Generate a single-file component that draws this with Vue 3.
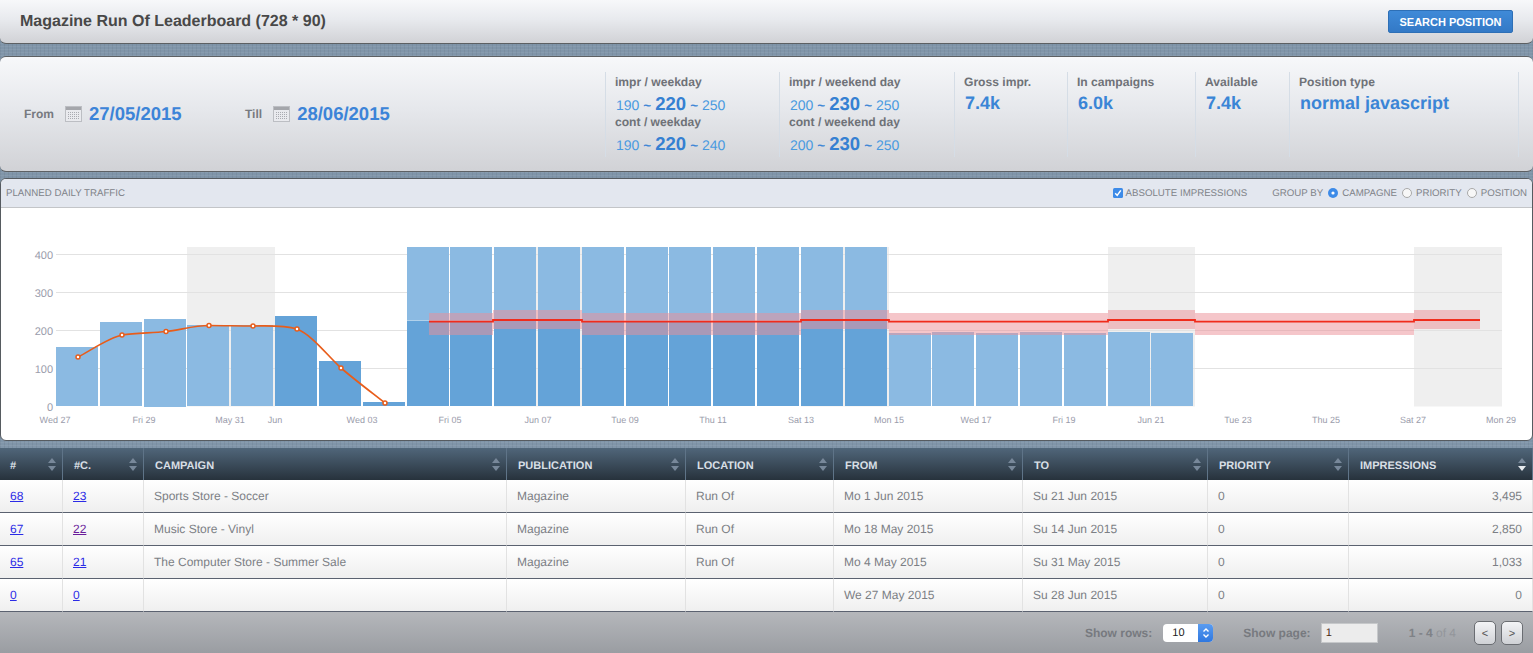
<script setup>
const statGroups = [
  { a: 'impr / weekday', av: ['190', '220', '250'], b: 'cont / weekday', bv: ['190', '220', '240'] },
  { a: 'impr / weekend day', av: ['200', '230', '250'], b: 'cont / weekend day', bv: ['200', '230', '250'] }
]
const singles = [
  { label: 'Gross impr.', value: '7.4k' },
  { label: 'In campaigns', value: '6.0k' },
  { label: 'Available', value: '7.4k' },
  { label: 'Position type', value: 'normal javascript' }
]
const gridLines = [254.5, 292.5, 330.5, 368.5]
const yLabels = [
  { t: '400', y: 259 }, { t: '300', y: 297 }, { t: '200', y: 335 }, { t: '100', y: 373 }, { t: '0', y: 411 }
]
const xLabels = [
  ['Wed 27', 55], ['Fri 29', 144], ['May 31', 230], ['Jun', 275], ['Wed 03', 362], ['Fri 05', 450],
  ['Jun 07', 538], ['Tue 09', 625], ['Thu 11', 713], ['Sat 13', 801], ['Mon 15', 889], ['Wed 17', 976],
  ['Fri 19', 1064], ['Jun 21', 1151], ['Tue 23', 1238], ['Thu 25', 1326], ['Sat 27', 1413], ['Mon 29', 1501]
]
const weekends = [[187, 88], [494, 88], [801, 88], [1108, 87], [1414, 88]]
const earlyBars = [
  [56, 347, 0, 406], [100, 322, 0, 406], [144, 319, 0, 407], [187, 325, 0, 406], [231, 325, 0, 406],
  [275, 316, 1, 406], [319, 361, 1, 406], [363, 402, 1, 406]
]
const fullBars = [407, 450, 494, 538, 582, 626, 669, 713, 757, 801, 845]
const lateBars = [[889, 333], [932, 332], [976, 333], [1020, 332], [1064, 333], [1108, 332], [1151, 333]]
const bands = [
  [429, 493, 313, 335], [493, 582, 310, 329], [582, 801, 313, 335], [801, 889, 310, 329],
  [889, 1108, 313, 335], [1108, 1195, 310, 329], [1195, 1414, 313, 335], [1414, 1480, 310, 329]
]
const dots = [[78, 357], [122, 335], [166, 331.5], [209, 325.5], [253, 326], [297, 329], [341, 368], [385, 403]]
const columns = [
  { t: '#' }, { t: '#C.' }, { t: 'Campaign' }, { t: 'Publication' }, { t: 'Location' },
  { t: 'From' }, { t: 'To' }, { t: 'Priority' }, { t: 'Impressions', active: true }
]
const rows = [
  ['68', '23', 'Sports Store - Soccer', 'Magazine', 'Run Of', 'Mo 1 Jun 2015', 'Su 21 Jun 2015', '0', '3,495'],
  ['67', '22', 'Music Store - Vinyl', 'Magazine', 'Run Of', 'Mo 18 May 2015', 'Su 14 Jun 2015', '0', '2,850'],
  ['65', '21', 'The Computer Store - Summer Sale', 'Magazine', 'Run Of', 'Mo 4 May 2015', 'Su 31 May 2015', '0', '1,033'],
  ['0', '0', '', '', '', 'We 27 May 2015', 'Su 28 Jun 2015', '0', '0']
]
const widths = [63, 81, 363, 179, 148, 189, 185, 141, 184]
</script>

<template>
  <div class="page">
    <header class="bar">
      <h1>Magazine Run Of Leaderboard (728 * 90)</h1>
      <button class="search">SEARCH POSITION</button>
    </header>

    <section class="panel">
      <div class="dates">
        <div class="date first">
          <span class="dlabel">From</span>
          <svg class="cal" viewBox="0 0 17 16" width="17" height="16">
            <rect x=".5" y=".5" width="16" height="15" fill="#e9eaee" stroke="#bcbec3" />
            <rect x="1" y="1" width="15" height="3" fill="#a4a6ab" />
            <path d="M3 6.5h11M3 8.5h11M3 10.5h11M3 12.5h11" stroke="#a9abb1" stroke-dasharray="1 1" />
          </svg>
          <span class="dval">27/05/2015</span>
        </div>
        <div class="date">
          <span class="dlabel">Till</span>
          <svg class="cal" viewBox="0 0 17 16" width="17" height="16">
            <rect x=".5" y=".5" width="16" height="15" fill="#e9eaee" stroke="#bcbec3" />
            <rect x="1" y="1" width="15" height="3" fill="#a4a6ab" />
            <path d="M3 6.5h11M3 8.5h11M3 10.5h11M3 12.5h11" stroke="#a9abb1" stroke-dasharray="1 1" />
          </svg>
          <span class="dval">28/06/2015</span>
        </div>
      </div>
      <div class="stats">
        <div v-for="g in statGroups" :key="g.a" class="stat">
          <div class="slabel">{{ g.a }}</div>
          <div class="range"><span>{{ g.av[0] }}</span><b class="t">~</b><b class="mid">{{ g.av[1] }}</b><b class="t">~</b><span>{{ g.av[2] }}</span></div>
          <div class="slabel second">{{ g.b }}</div>
          <div class="range"><span>{{ g.bv[0] }}</span><b class="t">~</b><b class="mid">{{ g.bv[1] }}</b><b class="t">~</b><span>{{ g.bv[2] }}</span></div>
        </div>
        <div v-for="s in singles" :key="s.label" class="stat">
          <div class="slabel">{{ s.label }}</div>
          <div class="big">{{ s.value }}</div>
        </div>
      </div>
    </section>

    <section class="chart">
      <div class="chart-head">
        <span class="ctitle">PLANNED DAILY TRAFFIC</span>
        <div class="controls">
          <label class="opt abs">
            <svg viewBox="0 0 10 10" width="10" height="10"><rect width="10" height="10" rx="1.5" fill="#3d8be8" /><path d="M2.2 5.2l2 2.2 3.6-5" fill="none" stroke="#fff" stroke-width="1.5" /></svg>
            ABSOLUTE IMPRESSIONS
          </label>
          <span class="opt gb">GROUP BY</span>
          <label class="opt">
            <svg viewBox="0 0 10 10" width="10" height="10"><circle cx="5" cy="5" r="5" fill="#3d8be8" /><circle cx="5" cy="5" r="1.6" fill="#fff" /></svg>
            CAMPAGNE
          </label>
          <label class="opt">
            <svg viewBox="0 0 10 10" width="10" height="10"><circle cx="5" cy="5" r="4.5" fill="#f7f7f7" stroke="#a8a8a8" /></svg>
            PRIORITY
          </label>
          <label class="opt">
            <svg viewBox="0 0 10 10" width="10" height="10"><circle cx="5" cy="5" r="4.5" fill="#f7f7f7" stroke="#a8a8a8" /></svg>
            POSITION
          </label>
        </div>
      </div>
      <svg class="plot" viewBox="1 208 1531 232" width="1531" height="232">
        <rect v-for="w in weekends" :key="w[0]" :x="w[0]" y="247" :width="w[1]" height="159.5" fill="#efefef" />
        <line v-for="g in gridLines" :key="g" x1="56" x2="1502" :y1="g" :y2="g" stroke="#e2e2e2" />
        <text v-for="l in yLabels" :key="l.t" x="53" :y="l.y" text-anchor="end" class="ylab">{{ l.t }}</text>
        <text v-for="l in xLabels" :key="l[0]" :x="l[1]" y="423" text-anchor="middle" class="xlab">{{ l[0] }}</text>

        <rect v-for="b in earlyBars" :key="b[0]" :x="b[0]" :y="b[1]" width="42" :height="b[3] - b[1]" :fill="b[2] ? '#64a3d8' : '#8bbae2'" />
        <g v-for="x in fullBars" :key="x">
          <rect :x="x" y="247" width="42" height="73" fill="#8bbae2" />
          <rect :x="x" y="320.5" width="42" height="85.5" fill="#64a3d8" />
        </g>
        <rect v-for="b in lateBars" :key="b[0]" :x="b[0]" :y="b[1]" width="42" :height="406 - b[1]" fill="#8bbae2" />

        <rect v-for="b in bands" :key="b[0]" :x="b[0]" :y="b[2]" :width="b[1] - b[0]" :height="b[3] - b[2]" fill="#eb8f97" fill-opacity=".51" />
        <path d="M429 321.7H493V320H582V321.7H801V320H889V321.7H1108V320H1195V321.7H1414V320H1480" fill="none" stroke="#f02c1c" stroke-width="1.8" />

        <path d="M78 357C90 351 108 338 122 335C136 333 152 333 166 331.5C180 330 194 325.5 209 325.5C224 325.5 238 326 253 326C268 326 284 325 297 329C312 335 326 354 341 368C355 380 371 392 385 403" fill="none" stroke="#e85d1b" stroke-width="1.7" />
        <circle v-for="d in dots" :key="d[0]" :cx="d[0]" :cy="d[1]" r="2" fill="#fff" stroke="#e85d1b" stroke-width="1.5" />
      </svg>
    </section>

    <table class="grid">
      <colgroup><col v-for="(w, i) in widths" :key="i" :width="w" /></colgroup>
      <thead>
        <tr>
          <th v-for="c in columns" :key="c.t">
            {{ c.t }}
            <svg class="sort" viewBox="0 0 8 13" width="8" height="13">
              <path d="M4 0l4 5H0z" fill="#78889a" />
              <path d="M4 13l4-5H0z" :fill="c.active ? '#e6eaee' : '#78889a'" />
            </svg>
          </th>
        </tr>
      </thead>
      <tbody>
        <tr v-for="r in rows" :key="r[0]">
          <td v-for="(v, i) in r" :key="i" :class="{ num: i === 8 }">
            <a v-if="i < 2" href="#" :class="{ visited: v === '22' }">{{ v }}</a>
            <template v-else>{{ v }}</template>
          </td>
        </tr>
      </tbody>
    </table>

    <footer class="pager">
      <span class="plabel">Show rows:</span>
      <div class="sel">
        <span class="selv">10</span>
        <span class="selb">
          <svg viewBox="0 0 8 12" width="8" height="12"><path d="M1.5 4.5L4 2l2.5 2.5M1.5 7.5L4 10l2.5-2.5" fill="none" stroke="#fff" stroke-width="1.4" /></svg>
        </span>
      </div>
      <span class="plabel pg">Show page:</span>
      <div class="pinput">1</div>
      <span class="count"><b>1 - 4</b> of 4</span>
      <button class="nav">&lt;</button>
      <button class="nav">&gt;</button>
    </footer>
  </div>
</template>

<style>
html, body { margin: 0; background: #8095a9; }
</style>

<style scoped>
.page {
  width: 1533px;
  height: 653px;
  overflow: hidden;
  font-family: "Liberation Sans", Arial, sans-serif;
  text-rendering: geometricPrecision;
  background-color: #8095a9;
  background-image:
    repeating-linear-gradient(0deg, rgba(255, 255, 255, .06) 0 1px, transparent 1px 3px),
    repeating-linear-gradient(90deg, rgba(0, 0, 0, .05) 0 1px, transparent 1px 4px);
}
.bar {
  box-sizing: border-box;
  height: 44px;
  display: flex;
  align-items: center;
  justify-content: space-between;
  padding: 0 20px;
  background: linear-gradient(#f7f8fa, #e8eaee 45%, #d1d2d6);
  border-bottom: 1px solid #5d6063;
  border-radius: 0 0 6px 6px;
}
.bar h1 {
  margin: 0;
  padding-top: 1px;
  font-size: 16px;
  font-weight: bold;
  color: #484848;
}
.search {
  box-sizing: border-box;
  width: 125px;
  height: 23px;
  padding: 0;
  font: bold 11px "Liberation Sans", Arial, sans-serif;
  color: #fff;
  background: linear-gradient(#3f8ad8, #3379c6);
  border: 1px solid #2d6fb6;
  border-radius: 2px;
}
.panel {
  box-sizing: border-box;
  height: 116px;
  margin-top: 12px;
  display: flex;
  align-items: center;
  background: linear-gradient(#f7f8fa, #e6e8ec 45%, #d1d2d6);
  border-top: 1px solid #5d6063;
  border-bottom: 1px solid #5d6063;
  border-radius: 6px;
}
.dates {
  width: 605px;
  display: flex;
  padding-left: 24px;
  box-sizing: border-box;
}
.date { display: flex; align-items: center; }
.date.first { width: 221px; }
.dlabel { font-size: 12px; font-weight: bold; color: #777a80; margin-right: 11px; }
.cal { margin-right: 7px; }
.dval { font-size: 18.5px; font-weight: bold; color: #3c84d8; }
.stats {
  display: grid;
  grid-template-columns: 174px 175px 113px 128px 94px 229px;
  height: 85px;
  border-right: 1px solid #d5dde6;
}
.stat {
  border-left: 1px solid #d5dde6;
  padding-left: 9px;
  padding-top: 3px;
}
.slabel { font-size: 12.1px; font-weight: bold; color: #6f7278; line-height: 14px; }
.slabel.second { margin-top: -2px; }
.range {
  height: 26px;
  display: flex;
  align-items: baseline;
  padding-left: 1px;
  padding-top: 2px;
  gap: 4px;
  font-size: 14px;
  color: #4a9ae0;
  line-height: 26px;
}
.range .t { color: #3f86d6; font-size: 13.5px; }
.range .mid { font-size: 18.5px; color: #3580d2; }
.big { font-size: 18px; font-weight: bold; color: #3a85d6; line-height: 24px; padding: 2px 0 0 1px; }
.chart {
  box-sizing: border-box;
  height: 263px;
  margin-top: 6px;
  background: #fff;
  border: 1px solid #565b60;
  border-radius: 6px;
  overflow: hidden;
}
.chart-head {
  box-sizing: border-box;
  height: 29px;
  display: flex;
  align-items: center;
  justify-content: space-between;
  padding: 0 5px;
  background: #e3e7ef;
  border-bottom: 1px solid #c3c5c8;
  font-size: 9.7px;
  color: #808389;
}
.controls { display: flex; align-items: center; }
.opt { display: flex; align-items: center; gap: 4px; margin-left: 5px; }
.abs { margin-right: 20px; gap: 3px; }
.plot { display: block; }
.ylab { font-size: 11px; fill: #9a9cab; }
.xlab { font-size: 9px; fill: #9a9cab; }
.grid {
  width: 1533px;
  margin-top: 7px;
  border-collapse: separate;
  border-spacing: 0;
  table-layout: fixed;
  font-size: 12px;
}
.grid th {
  position: relative;
  box-sizing: border-box;
  height: 32px;
  padding: 4px 0 0 11px;
  text-align: left;
  text-transform: uppercase;
  font-size: 11px;
  font-weight: bold;
  color: #d8dfe5;
  background: linear-gradient(#50667a, #27323c);
  border-right: 1px solid #5f7488;
}
.grid th:first-child { padding-left: 10px; }
.sort { position: absolute; right: 6px; top: 10px; }
.grid td {
  box-sizing: border-box;
  height: 33px;
  padding: 0 10px;
  color: #7c7f85;
  background: linear-gradient(#fff, #efefef);
  border-right: 1px solid #e2e2e2;
  border-bottom: 1px solid #5b6270;
}
.grid td.num { text-align: right; padding-right: 10px; }
.grid a { color: #2b2be6; }
.grid a.visited { color: #6a1b9a; }
.pager {
  box-sizing: border-box;
  height: 41px;
  display: flex;
  align-items: center;
  justify-content: flex-end;
  padding-right: 10px;
  background: linear-gradient(#b5b7bb, #9a9da2);
}
.plabel { font-size: 12px; font-weight: bold; color: #777a7f; }
.sel {
  display: flex;
  width: 50px;
  height: 18px;
  margin-left: 11px;
  background: #fff;
  border-radius: 4px;
  overflow: hidden;
  font-size: 11px;
  color: #222;
  line-height: 18px;
}
.selv { flex: 1; padding-left: 9px; }
.selb {
  width: 15px;
  display: flex;
  align-items: center;
  justify-content: center;
  background: linear-gradient(#5a9cf0, #2f78e0);
}
.pg { margin-left: 30px; }
.pinput {
  box-sizing: border-box;
  width: 57px;
  height: 20px;
  margin-left: 10px;
  padding-left: 4px;
  background: #ececec;
  border: 1px solid #c6c8ca;
  font-size: 11px;
  line-height: 18px;
  color: #4a2a10;
}
.count { margin-left: 31px; margin-right: 13px; font-size: 12px; color: #93969b; }
.count b { color: #7f8287; }
.nav {
  box-sizing: border-box;
  width: 22px;
  height: 24px;
  margin-left: 5px;
  padding: 0;
  font: 11px "Liberation Sans", Arial, sans-serif;
  color: #555;
  background: linear-gradient(#f3f4f6, #cfd1d5);
  border: 1px solid #6a6d72;
  border-radius: 5px;
}
</style>
